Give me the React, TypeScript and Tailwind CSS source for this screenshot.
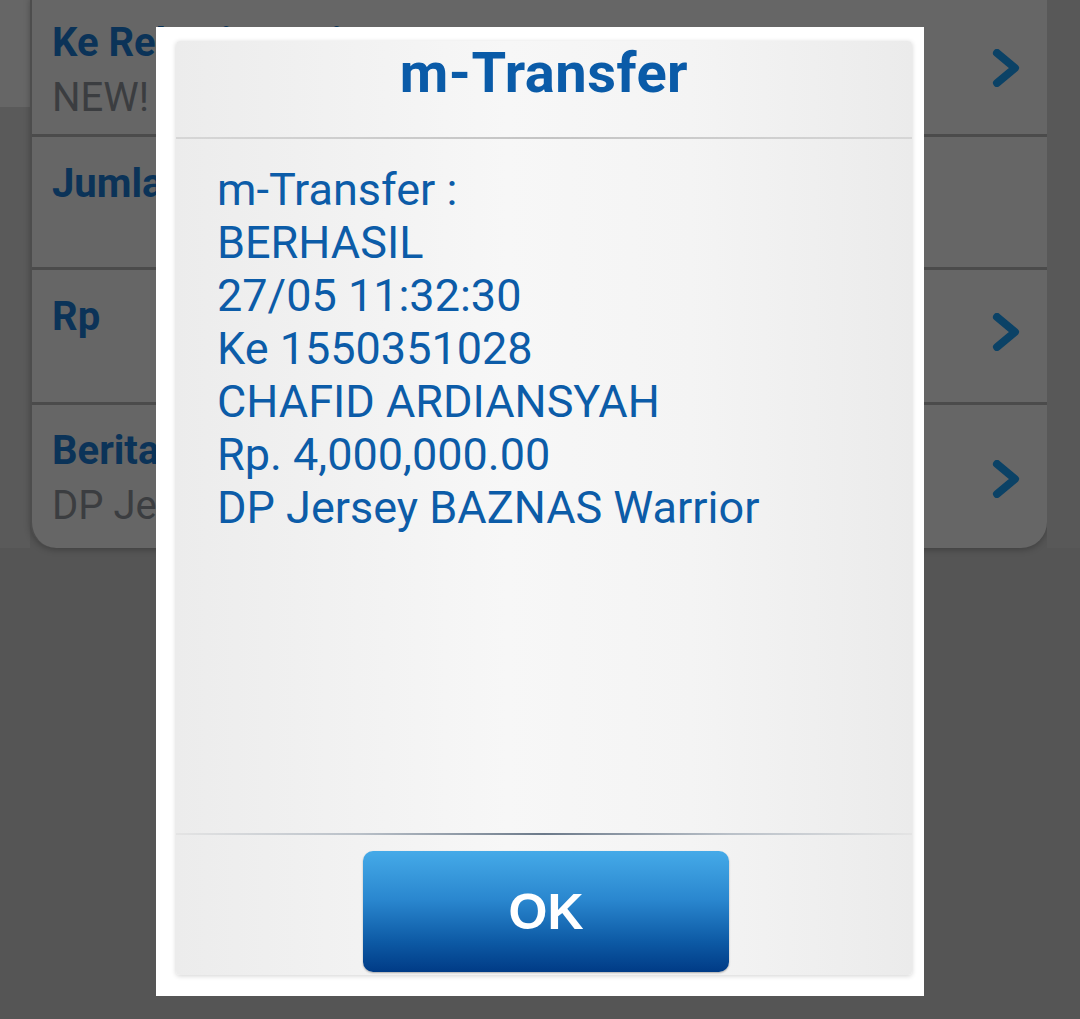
import React from "react";

const Chevron = () => (
  <svg width="30" height="38" viewBox="0 0 30 38" fill="none">
    <path d="M6 4 L24 19 L6 34" stroke="#0b4266" strokeWidth="8" strokeLinecap="round" strokeLinejoin="round" />
  </svg>
);

const rowTitle = "text-[40px] leading-[57px] font-bold text-[#0b3358]";
const rowSub = "text-[40px] leading-[53px] text-[#3b3d40]";

export default function App() {
  return (
    <div
      className="relative w-[1080px] h-[1019px] overflow-hidden bg-[#555555]"
      style={{ fontFamily: "Roboto, 'Noto Sans', sans-serif" }}
    >
      {/* background screen */}
      <div className="flex h-[551px] mt-[-3px]">
        <div className="w-[30px] flex flex-col">
          <div className="h-[110px] bg-[#666666]" />
          <div className="flex-1 bg-[#5a5a5a]" />
        </div>
        <div className="w-[1017px] flex flex-col border-l-2 border-[#4d4d4d] bg-[#666666] rounded-bl-[26px] rounded-br-[26px] shadow-[0_2px_6px_rgba(0,0,0,0.25)]">
          <div className="h-[140px] flex items-center justify-between pl-[20px] pr-[26px] border-b-[3px] border-[#4b4b4b]">
            <div className="flex flex-col self-start pt-[17px]">
              <span className={rowTitle}>Ke Rekening Tujuan</span>
              <span className={rowSub}>NEW! Daftar Tujuan</span>
            </div>
            <div className="mt-[4px]">
              <Chevron />
            </div>
          </div>
          <div className="h-[133px] flex items-start justify-between pl-[20px] pr-[26px] pt-[18px] border-b-[3px] border-[#4b4b4b]">
            <span className={rowTitle}>Jumlah</span>
          </div>
          <div className="h-[135px] flex items-center justify-between pl-[20px] pr-[26px] border-b-[3px] border-[#4b4b4b]">
            <div className="flex flex-col self-start pt-[18px]">
              <span className={rowTitle}>Rp</span>
            </div>
            <div className="mb-[8px]">
              <Chevron />
            </div>
          </div>
          <div className="flex-1 flex items-center justify-between pl-[20px] pr-[26px]">
            <div className="flex flex-col self-start pt-[17px]">
              <span className={rowTitle}>Berita</span>
              <span className={rowSub}>DP Jersey</span>
            </div>
            <div className="mt-[4px]">
              <Chevron />
            </div>
          </div>
        </div>
        <div className="flex-1 bg-[#585858]" />
      </div>

      {/* dialog */}
      <div className="absolute left-[156px] top-[27px] w-[768px] h-[969px] bg-white">
        <div className="ml-[20px] mt-[14px] w-[736px] h-[934px] flex flex-col rounded-[4px] bg-[linear-gradient(90deg,#ececec_0%,#f7f7f7_45%,#f4f4f4_70%,#ebebeb_100%)] shadow-[0_1px_5px_rgba(0,0,0,0.18)]">
          <div className="h-[96px] flex justify-center pt-[4px]">
            <span className="text-[56px] leading-[56px] font-bold text-[#0a5ba8] tracking-[0.5px]">m-Transfer</span>
          </div>
          <div className="h-[2px] bg-[linear-gradient(90deg,#d6d6d6,#c4c4c4_50%,#d6d6d6)]" />
          <div className="flex-1 flex flex-col pl-[41px] pt-[24px] text-[45px] leading-[53px] text-[#0c5ca8]">
            <span>m-Transfer :</span>
            <span>BERHASIL</span>
            <span>27/05 11:32:30</span>
            <span>Ke 1550351028</span>
            <span>CHAFID ARDIANSYAH</span>
            <span>Rp. 4,000,000.00</span>
            <span>DP Jersey BAZNAS Warrior</span>
          </div>
          <div className="h-[2px] bg-[linear-gradient(90deg,#e4e4e4_0%,#b9c0c8_25%,#6c7a8a_50%,#b9c0c8_75%,#e4e4e4_100%)]" />
          <div className="h-[140px] flex justify-center pt-[16px]">
            <div className="w-[366px] h-[121px] ml-[4px] rounded-[10px] flex items-center justify-center bg-[linear-gradient(180deg,#45aae8_0%,#2a87cf_40%,#0d5aa5_75%,#003b86_100%)] shadow-[0_1px_2px_rgba(0,0,0,0.3)]">
              <span
                className="text-[50px] font-bold text-white leading-none"
                style={{ fontFamily: "'Liberation Sans', Arial, sans-serif" }}
              >
                OK
              </span>
            </div>
          </div>
        </div>
      </div>
    </div>
  );
}
